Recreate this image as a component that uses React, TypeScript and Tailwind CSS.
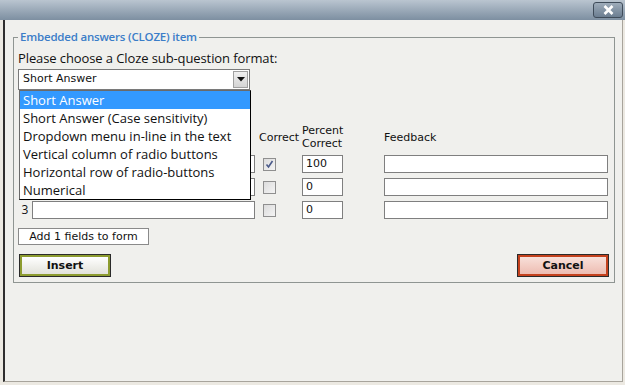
import React from "react";

const options = [
  "Short Answer",
  "Short Answer (Case sensitivity)",
  "Dropdown menu in-line in the text",
  "Vertical column of radio buttons",
  "Horizontal row of radio-buttons",
  "Numerical",
];

const rows = [
  { n: "1", pct: "100", checked: true },
  { n: "2", pct: "0", checked: false },
  { n: "3", pct: "0", checked: false },
];

const Checkbox: React.FC<{ checked: boolean }> = ({ checked }) => (
  <div className="w-[13px] h-[13px] border border-[#8f8f8f] bg-gradient-to-br from-[#dcdcdc] to-[#f4f4f4] flex items-center justify-center">
    {checked && (
      <svg width="9" height="9" viewBox="0 0 9 9">
        <path d="M1.5 4.5 L3.5 7 L7.5 1" fill="none" stroke="#4a5a8a" strokeWidth="1.6" />
      </svg>
    )}
  </div>
);

export default function App() {
  return (
    <div className="w-[625px] h-[385px] overflow-hidden bg-[#ece9e2] font-['DejaVu_Sans',sans-serif] text-[#111]">
      {/* TITLE BAR */}
      <div className="h-[20px] bg-gradient-to-b from-[#bac5d0] to-[#7d8fa1] flex items-start justify-end pr-[2px] pt-[2px]">
        <div className="w-[30px] h-[16px] rounded-[3px] border border-[#3f4c5a] bg-gradient-to-b from-[#9eacba] to-[#6c7e91] flex items-center justify-center">
          <svg width="11" height="10" viewBox="0 0 11 10">
            <path d="M1.5 1 L9.5 9 M9.5 1 L1.5 9" stroke="#fff" strokeWidth="2.6" />
          </svg>
        </div>
      </div>

      {/* PANEL */}
      <div className="ml-[3px] w-[620px] h-[362px] bg-[#f0f0ed] border-l-2 border-l-[#2e2e2e] border-r border-r-[#a8a49c] border-b border-b-[#a8a49c] pt-[9px]">
        <fieldset className="ml-[8px] w-[602px] border border-[#8f9592] pl-[4px] pr-[5px] pb-[5px]">
          <legend className="px-[2px] leading-[16px] text-[11.5px] font-semibold tracking-[-0.2px] text-[#3b7dc8] font-['Open_Sans',sans-serif]">
            Embedded answers (CLOZE) item
          </legend>

          <div className="pt-[4px] leading-[18px] text-[13px] tracking-[-0.1px] font-['Open_Sans',sans-serif] text-[#111]">
            Please choose a Cloze sub-question format:
          </div>

          {/* SELECT */}
          <div className="relative mt-[2px] w-[232px]">
            <div className="h-[21px] border border-[#7a7a7a] bg-white flex items-center justify-between">
              <span className="pl-[4px] text-[11px]">Short Answer</span>
              <div className="w-[15px] h-[17px] mr-[1px] border border-[#a0a0a0] bg-gradient-to-b from-[#f0f0f0] to-[#d4d4d4] flex items-center justify-center">
                <svg width="8" height="5" viewBox="0 0 8 5">
                  <path d="M0 0 L8 0 L4 4.5 Z" fill="#111" />
                </svg>
              </div>
            </div>

            {/* OPEN DROPDOWN */}
            <div className="absolute left-[1px] top-[21px] w-[232px] z-10 bg-white border border-[#6a6a6a] border-r-[#000] border-b-[#000] font-['Open_Sans',sans-serif] text-[13px]">
              {options.map((o, i) => (
                <div
                  key={o}
                  className={
                    i === 0
                      ? "h-[18px] leading-[18px] pl-[3px] bg-[#3399ff] text-white"
                      : "h-[18px] leading-[18px] pl-[3px] text-[#111]"
                  }
                >
                  {o}
                </div>
              ))}
            </div>
          </div>

          {/* TABLE HEADER */}
          <div className="mt-[34px] flex items-center text-[11px] leading-[13px] h-[26px]">
            <div className="w-[241px]" />
            <div className="w-[43px]">Correct</div>
            <div className="w-[82px]">
              Percent
              <br />
              Correct
            </div>
            <div>Feedback</div>
          </div>

          {/* ROWS */}
          <div className="mt-[5px] flex flex-col gap-[5px]">
            {rows.map((r) => (
              <div key={r.n} className="flex items-center h-[18px] text-[11px]">
                <div className="w-[14px] text-center text-[12px] font-['Open_Sans',sans-serif]">
                  {r.n === "3" ? r.n : ""}
                </div>
                <div className="w-[223px] h-[18px] border border-[#7f7f7f] bg-white" />
                <div className="w-[47px] pl-[8px]">
                  <Checkbox checked={r.checked} />
                </div>
                <div className="w-[41px] h-[18px] border border-[#7f7f7f] bg-white pl-[3px] leading-[16px]">
                  {r.pct}
                </div>
                <div className="ml-[41px] w-[224px] h-[18px] border border-[#7f7f7f] bg-white" />
              </div>
            ))}
          </div>

          <button className="mt-[9px] w-[131px] h-[17px] border border-[#8a8a8a] bg-white text-[11px] leading-[15px] text-center">
            Add 1 fields to form
          </button>

          {/* ACTIONS */}
          <div className="mt-[7px] pl-[1px] flex justify-between">
            <button className="w-[92px] h-[23px] border border-[#2a2a2a]">
              <div className="h-full border-2 border-[#8d9c2f] bg-gradient-to-b from-[#ffffff] to-[#e2e2da] text-[11px] font-bold leading-[17px]">
                Insert
              </div>
            </button>
            <button className="w-[92px] h-[23px] border border-[#2a2a2a]">
              <div className="h-full border-2 border-[#c4411d] bg-gradient-to-b from-[#f8e0da] to-[#edbcb1] text-[11px] font-bold leading-[17px]">
                Cancel
              </div>
            </button>
          </div>
        </fieldset>
      </div>
    </div>
  );
}
